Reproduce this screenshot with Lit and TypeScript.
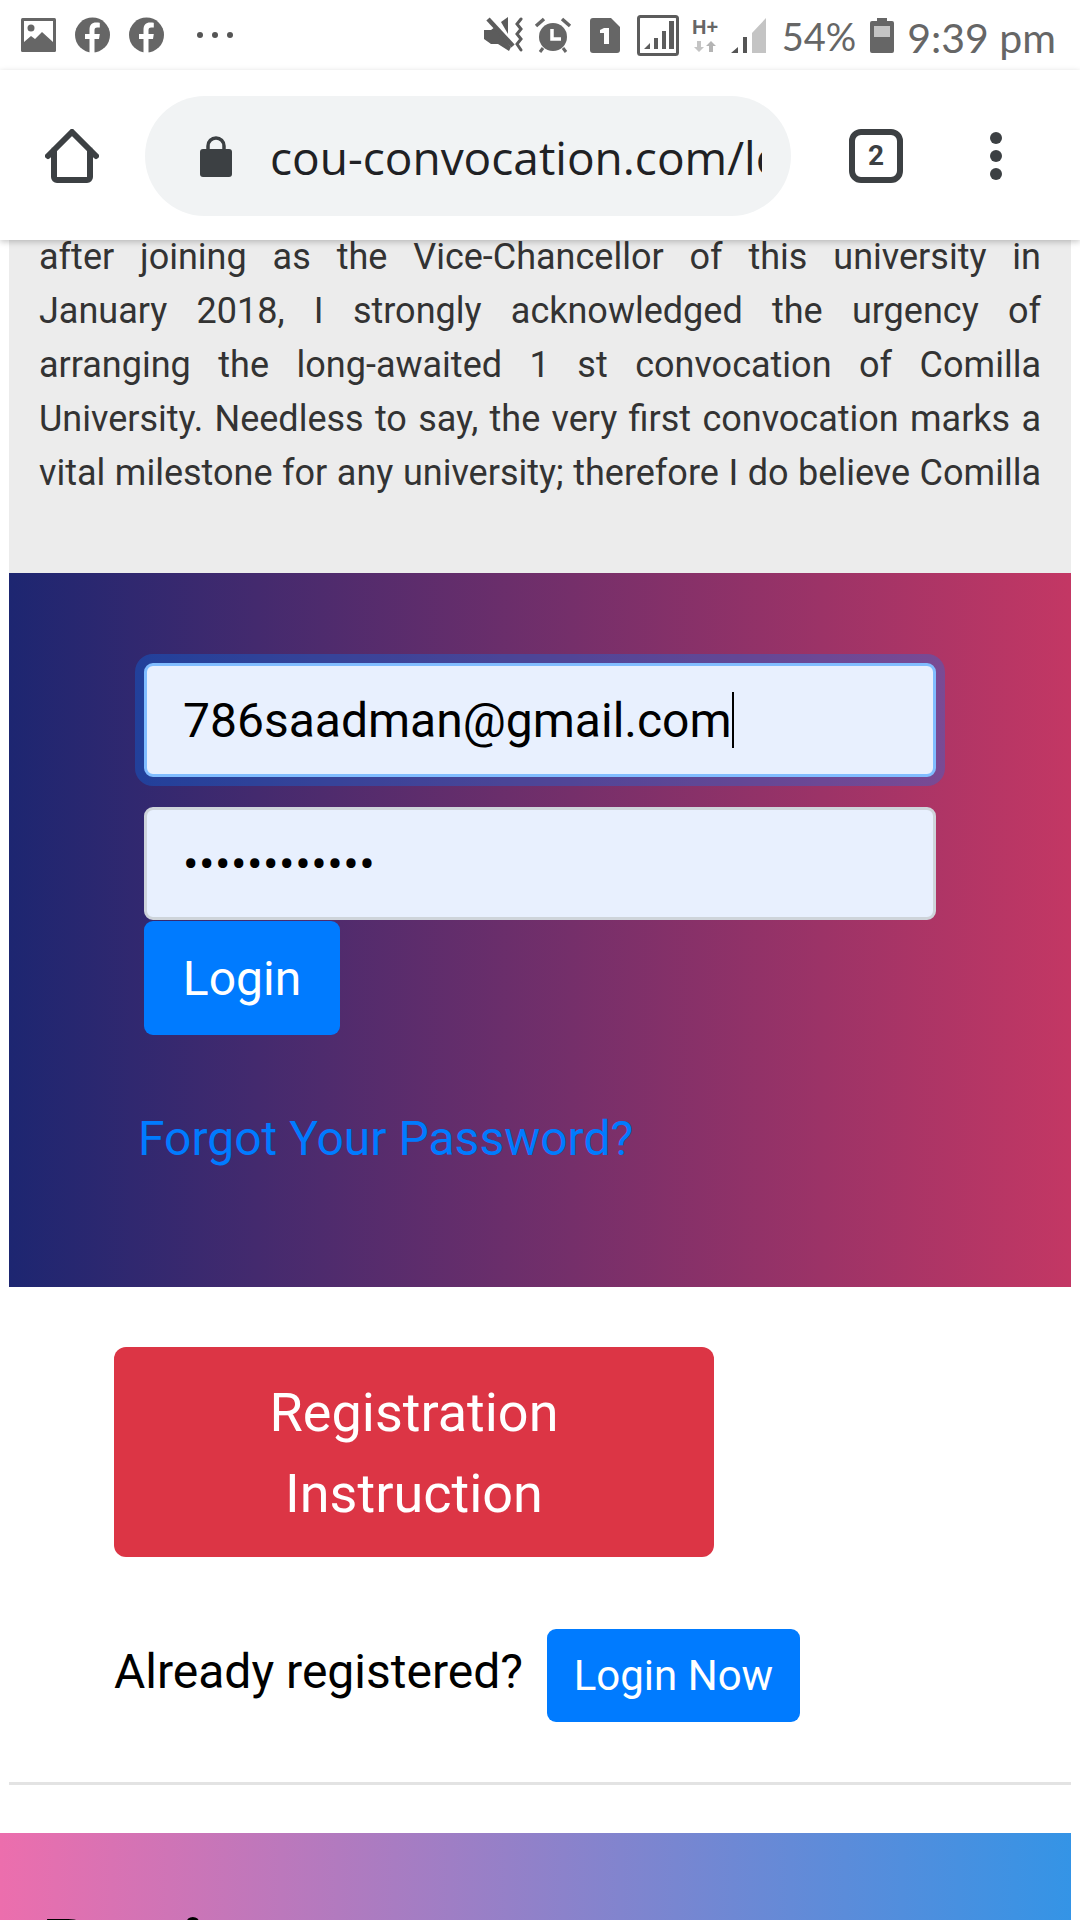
import { LitElement, css, html, svg } from "lit";
import { customElement } from "lit/decorators.js";

const fbIcon = svg`
  <circle cx="17.500" cy="18" r="17.500" fill="#666"/>
  <path d="M14.500 36V22H10v-5h4.500v-4.500c0-4.500 2.500-7 6.500-7 1.500 0 3.200 .2 3.800 .3V10.500h-2.500c-2.300 0-2.800 1.200-2.800 2.800V17h5.300l-.8 5H19.500v14z" fill="#fff"/>
`;

@customElement("app-root")
export class AppRoot extends LitElement {
  renderStatusBar() {
    return html`
      <div class="status">
        <div class="status-left">
          <svg width="35" height="34" viewBox="0 0 35 34">
            <rect x="0" y="0" width="35" height="34" rx="1.500" fill="#666"/>
            <rect x="3" y="3" width="29" height="21" fill="#fff"/>
            <circle cx="10" cy="10" r="3.500" fill="#666"/>
            <path d="M3 24l7-6 4 3 7-7 11 10v4H3z" fill="#666"/>
          </svg>
          <svg width="35" height="36" viewBox="0 0 35 36">${fbIcon}</svg>
          <svg width="35" height="36" viewBox="0 0 35 36">${fbIcon}</svg>
          <svg class="more" width="36" height="8" viewBox="0 0 36 8">
            <circle cx="3" cy="4" r="3" fill="#555"/>
            <circle cx="18" cy="4" r="3" fill="#555"/>
            <circle cx="33" cy="4" r="3" fill="#555"/>
          </svg>
        </div>
        <div class="status-right">
          <svg width="39" height="36" viewBox="0 0 39 36">
            <path d="M0 13h7l4-3 16 20-2 4-11-7H7l-7-5z" fill="#5c5c5c"/>
            <path d="M17 5l7-5v17z" fill="#5c5c5c"/>
            <path d="M4 2l25 27" stroke="#5c5c5c" stroke-width="4.500" fill="none"/>
            <path d="M37 2l-4 5 4 5-4 5 4 5-4 5 4 6" stroke="#5c5c5c" stroke-width="3" fill="none" stroke-linecap="round"/>
          </svg>
          <svg class="alarm" width="38" height="36" viewBox="0 0 38 36">
            <circle cx="19" cy="20" r="14" fill="#666"/>
            <path d="M18 12v10h9" stroke="#fff" stroke-width="3.500" fill="none"/>
            <path d="M2 9l8-7M36 9l-8-7" stroke="#666" stroke-width="3.500"/>
            <path d="M9 31l-3 4M29 31l3 4" stroke="#666" stroke-width="3"/>
          </svg>
          <svg class="sim" width="30" height="35" viewBox="0 0 30 35">
            <path d="M3 0h18l9 9v23a3 3 0 0 1-3 3H3a3 3 0 0 1-3-3V3a3 3 0 0 1 3-3z" fill="#666"/>
            <path d="M14 10h5v16h-5V15h-4v-3z" fill="#fff"/>
          </svg>
          <svg class="signal-box" width="42" height="41" viewBox="0 0 42 41">
            <rect x="1.500" y="1.500" width="39" height="38" rx="2" fill="none" stroke="#5c5c5c" stroke-width="3"/>
            <path d="M7 34l6-6v6zM17 34V23h4v11zM25 34V16h4v18zM32 34V6h5v28z" fill="#5c5c5c"/>
          </svg>
          <div class="hplus">
            <span>H+</span>
            <svg width="22" height="11" viewBox="0 0 22 11">
              <path d="M3 0h4v6h3l-5 5-5-5h3z" fill="#c4c4c4"/>
              <path d="M15 11h4V5h3l-5-5-5 5h3z" fill="#b4b4b4"/>
            </svg>
          </div>
          <svg class="signal" width="35" height="35" viewBox="0 0 35 35">
            <path d="M0 35l7-6v6zM12 35V19h4v16z" fill="#555"/>
            <path d="M21 35V15L35 0v35z" fill="#c4c4c4"/>
          </svg>
          <span class="pct">54%</span>
          <svg class="battery" width="24" height="35" viewBox="0 0 24 35">
            <path d="M7 0h10v3h5a2 2 0 0 1 2 2v28a2 2 0 0 1-2 2H2a2 2 0 0 1-2-2V5a2 2 0 0 1 2-2h5z" fill="#666"/>
            <rect x="4" y="8" width="16" height="11" fill="#c4c4c4"/>
          </svg>
          <span class="time">9:39 pm</span>
        </div>
      </div>
    `;
  }

  renderToolbar() {
    return html`
      <div class="toolbar">
        <svg class="home" width="54" height="54" viewBox="0 0 54 54">
          <path d="M3 27L27 3l24 24M9 21v27a3 3 0 0 0 3 3h30a3 3 0 0 0 3-3V21" fill="none" stroke="#3c4043" stroke-width="6" stroke-linecap="round" stroke-linejoin="round"/>
        </svg>
        <div class="pill">
          <svg width="32" height="42" viewBox="0 0 32 42">
            <path d="M8 16V11a8 8 0 0 1 16 0v5" fill="none" stroke="#3c4043" stroke-width="3.500"/>
            <rect x="0" y="14" width="32" height="28" rx="3" fill="#3c4043"/>
          </svg>
          <span class="url">cou-convocation.com/login</span>
        </div>
        <div class="tabs">2</div>
        <svg class="menu" width="12" height="48" viewBox="0 0 12 48">
          <circle cx="6" cy="6" r="6" fill="#3c4043"/>
          <circle cx="6" cy="24" r="6" fill="#3c4043"/>
          <circle cx="6" cy="42" r="6" fill="#3c4043"/>
        </svg>
      </div>
    `;
  }

  render() {
    return html`
      ${this.renderStatusBar()} ${this.renderToolbar()}
      <div class="page">
        <div class="message">
          <div>after joining as the Vice-Chancellor of this university in</div>
          <div>January 2018, I strongly acknowledged the urgency of</div>
          <div>arranging the long-awaited 1 st convocation of Comilla</div>
          <div>University. Needless to say, the very first convocation marks a</div>
          <div>vital milestone for any university; therefore I do believe Comilla</div>
        </div>

        <div class="login-panel">
          <div class="field focused">786saadman@gmail.com<span class="caret"></span></div>
          <div class="field dots">••••••••••••</div>
          <button class="btn login">Login</button>
          <a class="forgot">Forgot Your Password?</a>
        </div>

        <div class="register">
          <button class="reg-btn">Registration<br />Instruction</button>
          <div class="already">
            <span class="already-text">Already registered?</span>
            <button class="btn login-now">Login Now</button>
          </div>
        </div>
        <hr />
        <div class="next-panel"><h2>Register</h2></div>
      </div>
    `;
  }

  static styles = css`
    :host {
      display: block;
      width: 1080px;
      height: 1920px;
      overflow: hidden;
      background: #fff;
      font-family: Roboto, sans-serif;
      color: #000;
    }

    .status {
      height: 70px;
      display: flex;
      justify-content: space-between;
      align-items: center;
      padding: 0 24px 0 21px;
      color: #666;
    }

    .status-left,
    .status-right {
      display: flex;
      align-items: center;
    }

    .status-left {
      gap: 19px;
    }

    .more {
      margin-left: 14px;
    }

    .status-right {
      gap: 14px;
    }

    .alarm {
      margin-left: -3px;
    }

    .sim {
      margin-left: 4px;
    }

    .signal-box {
      margin-left: 3px;
    }

    .hplus {
      width: 25px;
      display: flex;
      flex-direction: column;
      align-items: center;
      gap: 5px;
      font: 700 20px/18px "Liberation Sans", sans-serif;
    }

    .signal {
      margin-left: -1px;
    }

    .pct {
      margin: 2px 0 0 2px;
      font: 400 38px/44px Lato, sans-serif;
    }

    .time {
      margin: 5px 0 0 -1px;
      font: 400 41px/44px Lato, sans-serif;
      white-space: nowrap;
    }

    .toolbar {
      position: relative;
      height: 170px;
      box-sizing: border-box;
      padding: 2px 0 0 45px;
      display: flex;
      align-items: center;
      background: #fff;
      box-shadow: 0 2px 6px rgba(0, 0, 0, 0.22);
    }

    .pill {
      width: 646px;
      height: 120px;
      margin-left: 46px;
      box-sizing: border-box;
      padding: 0 29px 0 55px;
      border-radius: 60px;
      background: #f1f3f4;
      display: flex;
      align-items: center;
      gap: 38px;
      overflow: hidden;
    }

    .url {
      flex: 1;
      overflow: hidden;
      white-space: nowrap;
      margin-top: 2px;
      font: 400 46px/56px "Open Sans", sans-serif;
      color: #202124;
    }

    .tabs {
      width: 54px;
      height: 54px;
      margin-left: 58px;
      box-sizing: border-box;
      border: 6px solid #3c4043;
      border-radius: 12px;
      display: flex;
      align-items: center;
      justify-content: center;
      font: 700 28px/1 Roboto, sans-serif;
      color: #3c4043;
    }

    .menu {
      margin-left: 87px;
    }

    .page {
      margin-top: -10px;
      padding: 0 9px;
    }

    .message {
      background: #ececec;
      padding: 0 30px 73px;
      color: #333;
      font-size: 36px;
      line-height: 54px;
      text-align: justify;
      text-align-last: justify;
    }

    .message div {
      white-space: nowrap;
    }

    .login-panel {
      height: 714px;
      box-sizing: border-box;
      padding: 90px 135px 0;
      display: flex;
      flex-direction: column;
      align-items: flex-start;
      background: linear-gradient(to right, #1d2671, #c33764);
    }

    .field {
      width: 100%;
      height: 114px;
      box-sizing: border-box;
      margin-bottom: 30px;
      padding: 0 36px;
      display: flex;
      align-items: center;
      background: #e8f0fe;
      border: 3px solid #ced4da;
      border-radius: 9px;
      font-size: 48px;
      color: #000;
    }

    .field.focused {
      border-color: #80bdff;
      box-shadow: 0 0 0 9px rgba(0, 123, 255, 0.3);
    }

    .caret {
      width: 2px;
      height: 56px;
      background: #000;
    }

    .field.dots {
      height: 113px;
      margin-bottom: 1px;
      font-size: 46px;
      letter-spacing: 0.5px;
    }

    .btn {
      border: none;
      border-radius: 9px;
      background: #007bff;
      color: #fff;
      font-family: Roboto, sans-serif;
      padding: 0;
    }

    .login {
      width: 196px;
      height: 114px;
      font-size: 48px;
    }

    .forgot {
      margin: 76px 0 0 -6px;
      color: #007bff;
      font-size: 48px;
      line-height: 56px;
    }

    .register {
      padding: 60px 0 0 105px;
      display: flex;
      flex-direction: column;
      align-items: flex-start;
    }

    .reg-btn {
      width: 600px;
      height: 210px;
      padding: 2px 0 0;
      border: none;
      border-radius: 12px;
      background: #dc3545;
      color: #fff;
      font: 400 54px/81px Roboto, sans-serif;
    }

    .already {
      margin-top: 72px;
      display: flex;
      align-items: center;
      gap: 24px;
      font-size: 48px;
    }

    .already-text {
      margin-bottom: 9px;
    }

    .login-now {
      width: 253px;
      height: 93px;
      font-size: 42px;
    }

    hr {
      height: 3px;
      margin: 60px 0 48px;
      border: none;
      background: #e3e3e3;
    }

    .next-panel {
      margin-left: -9px;
      height: 200px;
      padding: 72px 42px;
      box-sizing: border-box;
      background: linear-gradient(to right, #ec6ead, #3494e6);
    }

    h2 {
      margin: 0;
      font-size: 80px;
      line-height: 88px;
      font-weight: 700;
    }
  `;
}

declare global {
  interface HTMLElementTagNameMap {
    "app-root": AppRoot;
  }
}
